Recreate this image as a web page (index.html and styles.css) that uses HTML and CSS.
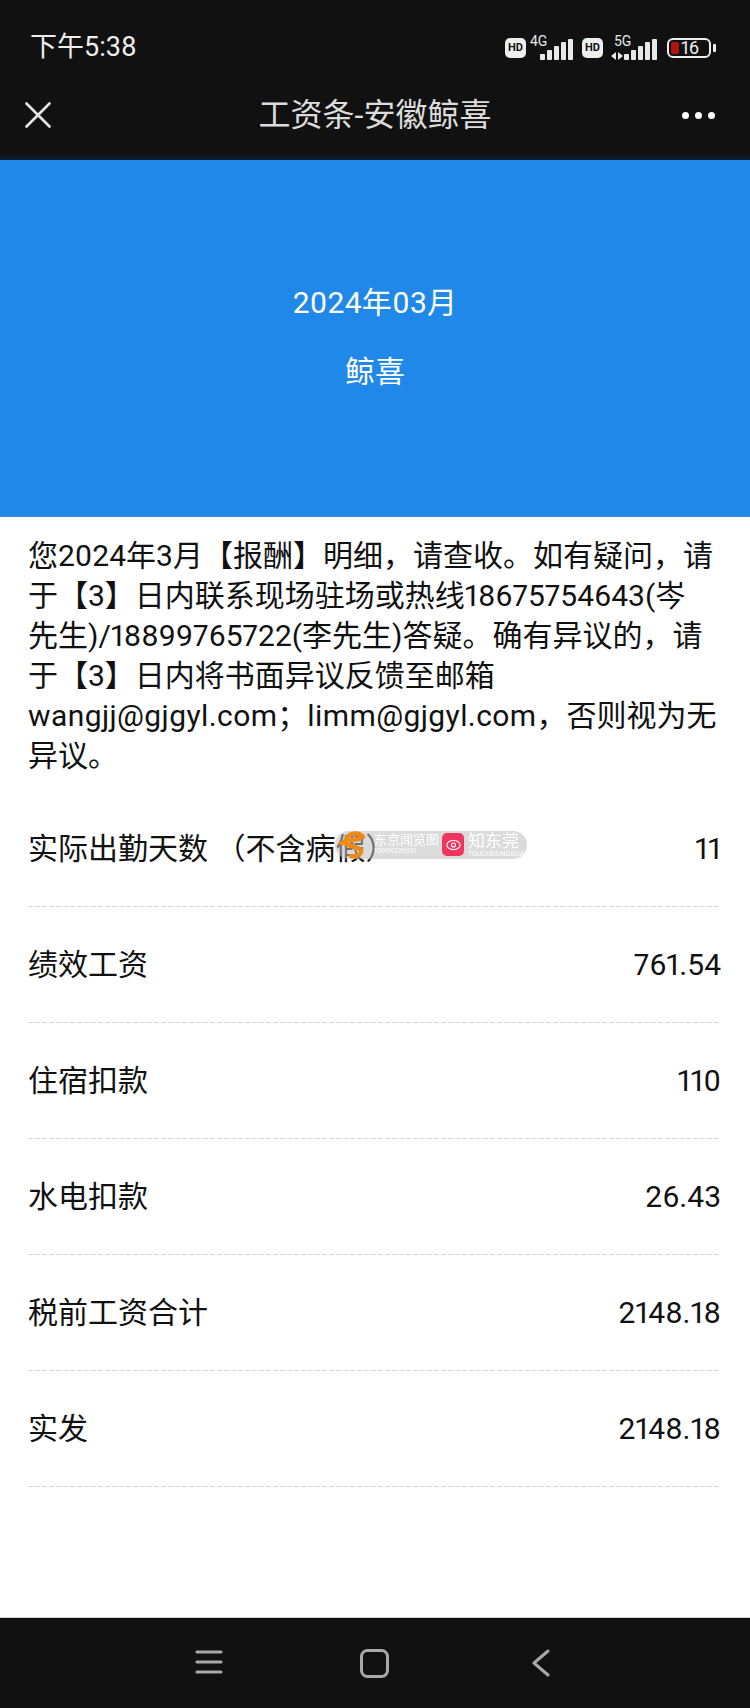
FILE: index.html
```html
<!DOCTYPE html>
<html lang="zh-CN">
<head>
<meta charset="utf-8">
<title>工资条-安徽鲸喜</title>
<link rel="stylesheet" href="styles.css">
</head>
<body>
<div class="phone">
  <header class="top">
    <div class="status">
      <span class="time">下午5:38</span>
      <div class="indicators">
        <span class="hd">HD</span>
        <span class="signal">
          <span class="net">4G</span>
          <svg class="bars" width="33" height="21" viewBox="0 0 33 21"><g fill="#e8e8e8"><rect x="0" y="15" width="5" height="6" rx="1"/><rect x="7" y="11" width="5" height="10" rx="1"/><rect x="14" y="7" width="5" height="14" rx="1"/><rect x="21" y="3" width="5" height="18" rx="1"/><rect x="28" y="0" width="5" height="21" rx="1"/></g></svg>
        </span>
        <span class="hd second">HD</span>
        <span class="signal five">
          <span class="net">5G</span>
          <svg class="arrows" width="12" height="8" viewBox="0 0 12 8"><path d="M5 0v8L0 4zM7 0l5 4-5 4z" fill="#e8e8e8"/></svg>
          <svg class="bars" width="33" height="21" viewBox="0 0 33 21"><g fill="#e8e8e8"><rect x="0" y="15" width="5" height="6" rx="1"/><rect x="7" y="11" width="5" height="10" rx="1"/><rect x="14" y="7" width="5" height="14" rx="1"/><rect x="21" y="3" width="5" height="18" rx="1"/><rect x="28" y="0" width="5" height="21" rx="1"/></g></svg>
        </span>
        <span class="battery"><span class="level"></span><span class="pct">16</span></span>
        <span class="tip"></span>
      </div>
    </div>
    <nav class="nav">
      <svg class="close" width="26" height="26" viewBox="0 0 26 26"><path d="M1.5 1.5l23 23M24.5 1.5l-23 23" stroke="#e6e6e6" stroke-width="2.6" stroke-linecap="round"/></svg>
      <h1 class="title">工资条-安徽鲸喜</h1>
      <div class="more"><i></i><i></i><i></i></div>
    </nav>
  </header>

  <section class="hero">
    <p class="month">2024年03月</p>
    <p class="name">鲸喜</p>
  </section>

  <main class="content">
    <p class="notice">您2024年3月【报酬】明细，请查收。如有疑问，请于【3】日内联系现场驻场或热线18675754643(岑<br>先生)/18899765722(李先生)答疑。确有异议的，请于【3】日内将书面异议反馈至邮箱<span class="mail">wangjj@gjgyl.com</span>；<span class="mail">limm@gjgyl.com</span>，否则视为无异议。</p>
    <ul class="rows">
      <li class="row"><span>实际出勤天数 （不含病假）</span><span class="val">11</span></li>
      <li class="row"><span>绩效工资</span><span class="val">761.54</span></li>
      <li class="row"><span>住宿扣款</span><span class="val">110</span></li>
      <li class="row"><span>水电扣款</span><span class="val">26.43</span></li>
      <li class="row"><span>税前工资合计</span><span class="val">2148.18</span></li>
      <li class="row"><span>实发</span><span class="val">2148.18</span></li>
    </ul>
    <div class="mark">
      <span class="mark-a">东京闻览图<small>1009X2263S1</small></span>
      <span class="eye"><svg width="18" height="14" viewBox="0 0 18 14"><ellipse cx="9" cy="7" rx="8" ry="5.5" fill="none" stroke="#fff" stroke-width="1.3"/><circle cx="9" cy="7" r="2.4" fill="none" stroke="#fff" stroke-width="1.3"/></svg></span>
      <span class="mark-b">知东莞<small>TOUCHDONGGUAN</small></span>
      <svg class="fox" width="32" height="28" viewBox="0 0 32 28"><path d="M0 13l7-5 3 7z" fill="#ef8a17"/><path d="M26 6C21 0 11 2 9 9c-1 4 3 6 8 7 5 1 8 3 7 5-1 3-5 5-10 4" fill="none" stroke="#ef8a17" stroke-width="4.5" stroke-linecap="round"/><path d="M9 8l16-3-2 5-10 2z" fill="#ef8a17"/></svg>
    </div>
  </main>

  <footer class="bottom">
    <svg width="28" height="26" viewBox="0 0 28 26"><path d="M2 3h24M2 13h24M2 23h24" stroke="#a8a8a8" stroke-width="3.2" stroke-linecap="round"/></svg>
    <svg width="29" height="29" viewBox="0 0 29 29"><rect x="1.5" y="1.5" width="26" height="26" rx="6" fill="none" stroke="#a8a8a8" stroke-width="3"/></svg>
    <svg width="18" height="28" viewBox="0 0 18 28"><path d="M16 2L2 14l14 12" fill="none" stroke="#a8a8a8" stroke-width="3" stroke-linecap="round" stroke-linejoin="round"/></svg>
  </footer>
</div>
</body>
</html>
```

FILE: styles.css
```css
* { box-sizing: border-box; }
html, body { margin: 0; padding: 0; }
body { background: #fff; font-family: Roboto, "Noto Sans CJK SC", sans-serif; font-variant-numeric: proportional-nums; }
p, h1, ul { margin: 0; padding: 0; }

.phone { width: 750px; height: 1708px; display: flex; flex-direction: column; overflow: hidden; }

.top { height: 160px; background: #111; color: #e8e8e8; flex: none; border-bottom: 4px solid #0a1a2c; }
.status { height: 94px; padding: 29px 34px 0 30px; display: flex; justify-content: space-between; align-items: flex-start; }
.time { font-size: 27px; line-height: 36px; color: #eee; }
.indicators { display: flex; align-items: center; height: 36px; margin-top: 1px; }
.hd { width: 21px; height: 20px; border-radius: 5px; background: #eee; color: #111; font-size: 11px; font-weight: 700; line-height: 20px; text-align: center; }
.second { margin-left: 9px; }
.signal { position: relative; display: block; width: 47px; height: 24px; }
.signal .bars { position: absolute; right: 0; bottom: 0; }
.net { position: absolute; left: 4px; top: -3px; font-size: 14px; line-height: 16px; color: #e8e8e8; }
.five { width: 54px; }
.five .net { left: 11px; }
.arrows { position: absolute; left: 8px; bottom: 0; }
.battery { position: relative; display: block; width: 44px; height: 20px; margin-left: 10px; border: 2px solid #eee; border-radius: 6px; }
.level { position: absolute; left: 2px; top: 2px; bottom: 2px; width: 8px; border-radius: 2px; background: #b3130f; }
.pct { position: absolute; left: 12px; top: -2px; font-size: 18px; line-height: 20px; color: #eee; }
.tip { width: 3px; height: 8px; margin-left: 2px; border-radius: 1px; background: #eee; }

.nav { position: relative; height: 62px; padding: 0 35px 0 25px; display: flex; align-items: flex-start; justify-content: space-between; }
.close { margin-top: 8px; }
.title { position: absolute; left: 0; right: 0; top: -1px; font-size: 32px; line-height: 44px; font-weight: 400; text-align: center; color: #dcdcdc; }
.more { display: flex; gap: 6px; margin-top: 18px; }
.more i { width: 7px; height: 7px; border-radius: 50%; background: #fff; display: block; }

.hero { height: 357px; background: #2088e8; color: #fff; flex: none; display: flex; flex-direction: column; align-items: center; padding-top: 123px; border-bottom: 1px solid #3f86cf; }
.month { font-size: 30px; line-height: 40px; letter-spacing: .3px; }
.name { font-size: 30px; line-height: 40px; margin-top: 29px; }

.content { position: relative; flex: 1; padding: 19px 29px 0 28px; color: #111; }
.notice { font-size: 30px; line-height: 40px; }
.mail { letter-spacing: .4px; }
.rows { list-style: none; margin-top: 15px; }
.row { height: 116px; display: flex; justify-content: space-between; align-items: center; font-size: 30px; line-height: 40px; padding-bottom: 1px; background: repeating-linear-gradient(90deg, #d8d8d8 0 5px, transparent 5px 7px) left bottom / 100% 1px no-repeat; }

.mark { position: absolute; left: 335px; top: 314px; width: 192px; height: 28px; border-radius: 14px; background: rgba(190,190,190,.55); color: #fff; }
.fox { position: absolute; left: 2px; top: 0; }
.mark-a, .mark-b { position: absolute; top: 2px; white-space: nowrap; filter: blur(.5px); }
.mark-a { left: 39px; font-size: 13px; line-height: 14px; }
.mark-b { left: 133px; font-size: 17px; line-height: 17px; }
.mark-a small, .mark-b small { display: block; font-size: 7px; line-height: 8px; }
.eye { position: absolute; left: 107px; top: 2px; width: 22px; height: 23px; border-radius: 5px; background: #f0355f; display: flex; align-items: center; justify-content: center; }
.eye svg { width: 15px; height: 12px; }

.bottom { height: 91px; flex: none; background: #111; border-top: 1px solid #cfcfcf; display: flex; align-items: flex-start; padding: 31px 0 0 195px; }
.bottom svg:nth-child(2) { margin-left: 137px; }
.bottom svg:nth-child(3) { margin-left: 143px; }
```
